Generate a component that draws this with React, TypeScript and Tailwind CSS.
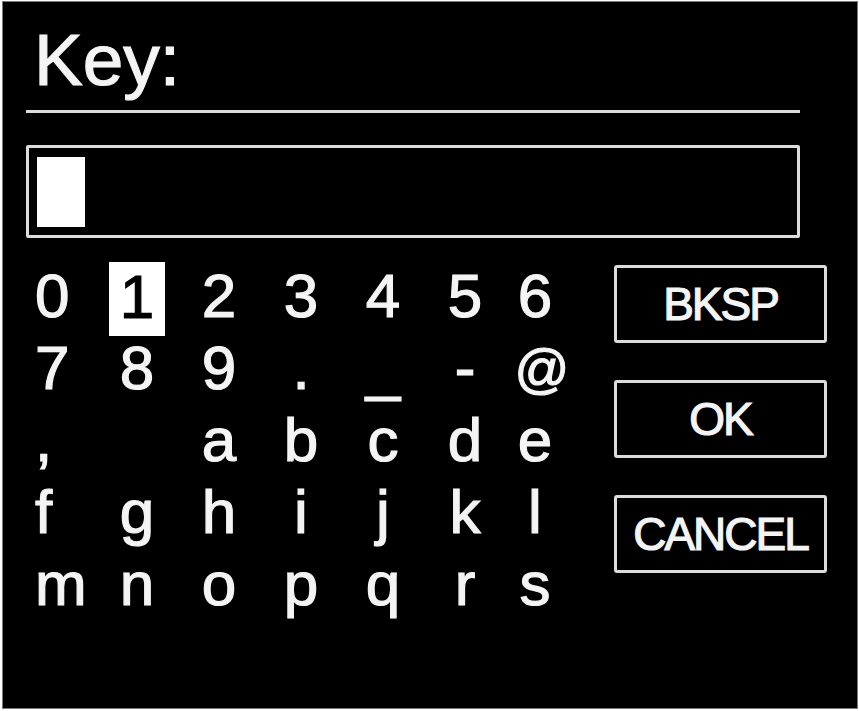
export default function App() {
  const rows = [
    ["0", "1", "2", "3", "4", "5", "6"],
    ["7", "8", "9", ".", "_", "-", "@"],
    [",", " ", "a", "b", "c", "d", "e"],
    ["f", "g", "h", "i", "j", "k", "l"],
    ["m", "n", "o", "p", "q", "r", "s"],
  ];
  const selected = "1";
  const buttons = ["BKSP", "OK", "CANCEL"];

  return (
    <div className="w-[859px] h-[711px] bg-white overflow-hidden font-['Liberation_Sans',Arial,sans-serif]">
      <div className="ml-[2px] mt-[1px] w-[856px] h-[708px] bg-black border border-[#7a7a7a] text-[#f4f4f4] [-webkit-text-stroke:1.2px_#f4f4f4]">
        <div className="ml-[31px] mt-[22px] h-[72px] text-[73px] leading-[72px]">
          Key:
        </div>
        <div className="ml-[23px] mt-[14px] w-[774px] h-[3px] bg-[#dcdcdc]"></div>
        <div className="ml-[23px] mt-[32px] w-[774px] h-[93px] border-[3px] border-[#dcdcdc] rounded-[2px] pl-[8px] pt-[9px]">
          <div className="w-[48px] h-[70px] bg-white"></div>
        </div>

        <div className="flex mt-[22px]">
          <div className="ml-[32px] grid grid-cols-[61px_82px_82px_82px_82px_82px_58px] auto-rows-[72px] text-[62px] leading-[72px]">
            {rows.map((row, r) =>
              row.map((ch, c) => (
                <div
                  key={r + "-" + c}
                  className={c === 0 ? "text-left" : "flex justify-center"}
                >
                  {ch === selected ? (
                    <span className="block w-[56px] h-[74px] mt-[2px] bg-white text-black [-webkit-text-stroke:1.2px_black] text-center leading-[70px]">
                      {ch}
                    </span>
                  ) : ch === "@" ? (
                    <span className="pl-[14px] text-[54px]">{ch}</span>
                  ) : (
                    <span className="whitespace-pre">{ch}</span>
                  )}
                </div>
              ))
            )}
          </div>

          <div className="ml-[50px] mt-[5px] flex flex-col gap-[37px]">
            {buttons.map((b) => (
              <div
                key={b}
                className="w-[213px] h-[78px] border-[3px] border-[#dcdcdc] rounded-[3px] flex items-center justify-center text-[46px] tracking-[-2px]"
              >
                {b}
              </div>
            ))}
          </div>
        </div>
      </div>
    </div>
  );
}
